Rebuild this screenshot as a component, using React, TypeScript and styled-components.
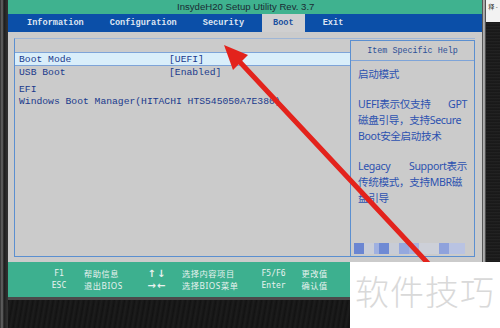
import React from "react";
import styled, { createGlobalStyle } from "styled-components";

const GlobalStyle = createGlobalStyle`
  html, body {
    margin: 0;
    padding: 0;
    background: #161616;
  }
  * {
    box-sizing: border-box;
  }
`;

const MONO = `"Liberation Mono", "Noto Sans CJK SC", monospace`;
const CJK = `"Noto Sans", "Noto Sans CJK SC", sans-serif`;

const TABS = ["Information", "Configuration", "Security", "Boot", "Exit"];

const ROWS: { label: string; value?: string; selected?: boolean; gap?: boolean }[] = [
  { label: "Boot Mode", value: "[UEFI]", selected: true },
  { label: "USB Boot", value: "[Enabled]" },
  { label: "", gap: true },
  { label: "EFI" },
  { label: "Windows Boot Manager(HITACHI HTS545050A7E380)" },
];

// lines with two parts are pushed to both edges, as the BIOS help text does
const HELP: { parts: string[]; gapBefore?: boolean }[] = [
  { parts: ["启动模式"] },
  { parts: ["UEFI表示仅支持", "GPT"], gapBefore: true },
  { parts: ["磁盘引导，支持Secure"] },
  { parts: ["Boot安全启动技术"] },
  { parts: ["Legacy", "Support表示"], gapBefore: true },
  { parts: ["传统模式，支持MBR磁"] },
  { parts: ["盘引导"] },
];

const MOSAIC = [
  { w: 10, c: "#6b86d2" },
  { w: 10, c: "#c9cdd8" },
  { w: 5, c: "#9fb0e0" },
  { w: 10, c: "#6f8ad4" },
  { w: 10, c: "#c8ccd6" },
  { w: 10, c: "#95a8de" },
  { w: 10, c: "#a6b4e0" },
  { w: 20, c: "#cdd0d8" },
  { w: 10, c: "#8fa2dc" },
  { w: 16, c: "#b9c3e2" },
];

const HINTS = [
  { k1: "F1", d1: "帮助信息", k2: "ESC", d2: "退出BIOS", keyW: 22, align: "center", arrows: false },
  { k1: "↑↓", d1: "选择内容项目", k2: "→←", d2: "选择BIOS菜单", keyW: 22, align: "center", arrows: true },
  { k1: "F5/F6", d1: "更改值", k2: "Enter", d2: "确认值", keyW: 26, align: "left", arrows: false },
];

const App = () => {
  return (
    <>
      <GlobalStyle />
      <Photo>
        <LeftEdge />
        <Monitor>
          <Screen>
            <TitleBar>InsydeH20 Setup Utility Rev. 3.7</TitleBar>
            <NavBar>
              {TABS.map((t) => (
                <Tab key={t} $active={t === "Boot"}>
                  {t}
                </Tab>
              ))}
            </NavBar>
            <Main>
              <Frame>
                <ListPanel>
                  <ListHeader />
                  {ROWS.map((r, i) =>
                    r.gap ? (
                      <Spacer key={i} />
                    ) : (
                      <Row key={i} $selected={r.selected}>
                        <Label>{r.label}</Label>
                        {r.value && <Value>{r.value}</Value>}
                      </Row>
                    )
                  )}
                </ListPanel>
                <HelpPanel>
                  <HelpHeader>Item Specific Help</HelpHeader>
                  <HelpBody>
                    {HELP.map((h, i) => (
                      <HelpLine key={i} $gap={h.gapBefore}>
                        {h.parts.map((p) => (
                          <span key={p}>{p}</span>
                        ))}
                      </HelpLine>
                    ))}
                  </HelpBody>
                  <Mosaic>
                    {MOSAIC.map((m, i) => (
                      <Tile key={i} $w={m.w} $c={m.c} />
                    ))}
                  </Mosaic>
                </HelpPanel>
              </Frame>
            </Main>
            <Footer>
              {HINTS.map((h, i) => (
                <HintGroup key={i} $keyW={h.keyW} $keyAlign={h.align}>
                  <Key $arrows={h.arrows}>{h.k1}</Key>
                  <Desc>{h.d1}</Desc>
                  <Key $arrows={h.arrows}>{h.k2}</Key>
                  <Desc>{h.d2}</Desc>
                </HintGroup>
              ))}
            </Footer>
          </Screen>
          <Bezel />
        </Monitor>
        <RightEdge>
          <Divider />
          <DarkStrip />
        </RightEdge>
        <CornerTab>释 -</CornerTab>
        <Arrow viewBox="0 0 500 328" width={500} height={328}>
          <line x1="238" y1="60" x2="452" y2="289" stroke="#e3231c" strokeWidth="5" strokeLinecap="round" />
          <polygon points="224,45 248,55 233,70" fill="#e3231c" />
        </Arrow>
        <Watermark>软件技巧</Watermark>
      </Photo>
    </>
  );
};

export default App;

const Photo = styled.div`
  position: relative;
  width: 500px;
  height: 328px;
  overflow: hidden;
  display: flex;
  background: repeating-linear-gradient(
      100deg,
      #141414 0px,
      #1d1d1d 2px,
      #121212 5px
    );
`;

const LeftEdge = styled.div`
  width: 8px;
  flex: none;
  background: linear-gradient(90deg, #2a2a2a 0, #6a6a6a 2px, #1c1c1c 4px, #303030 7px);
`;

const Monitor = styled.div`
  width: 474px;
  flex: none;
  display: flex;
  flex-direction: column;
`;

const Screen = styled.div`
  display: flex;
  flex-direction: column;
  height: 297px;
`;

const TitleBar = styled.div`
  height: 14px;
  background: #3fb28f;
  color: #1b2a33;
  font-family: "Liberation Sans", Arial, sans-serif;
  font-size: 9.6px;
  line-height: 14px;
  padding-left: 169px;
  white-space: nowrap;
`;

const NavBar = styled.div`
  height: 18px;
  background: #0b4fa8;
  display: flex;
  align-items: stretch;
  padding-left: 19px;
  gap: 26px;
`;

const Tab = styled.div<{ $active?: boolean }>`
  font-family: ${MONO};
  font-weight: bold;
  font-size: 8.6px;
  line-height: 18px;
  color: ${({ $active }) => ($active ? "#1b4fa0" : "#dfe6f2")};
  background: ${({ $active }) => ($active ? "#cfcfd0" : "transparent")};
  padding: 0 ${({ $active }) => ($active ? "11px" : "0")};
  margin: 0 ${({ $active }) => ($active ? "-8px" : "0")};
  white-space: nowrap;
`;

const Main = styled.div`
  height: 230px;
  background: #cbcbcb;
  padding: 6px 7px 5px 6px;
`;

const Frame = styled.div`
  height: 100%;
  display: flex;
  border-left: 1px solid #5b8fd0;
  border-top: 1px solid #9fb6d6;
  border-bottom: 1px solid #5b8fd0;
`;

const ListPanel = styled.div`
  flex: 1;
  display: flex;
  flex-direction: column;
`;

const ListHeader = styled.div`
  height: 14px;
  flex: none;
  border-bottom: 1px solid #7ea4d8;
`;

const Row = styled.div<{ $selected?: boolean }>`
  height: ${({ $selected }) => ($selected ? "13px" : "12px")};
  flex: none;
  display: flex;
  align-items: center;
  padding-left: 4px;
  font-family: ${MONO};
  font-size: 9.7px;
  color: #1a3a8c;
  white-space: nowrap;
  background: ${({ $selected }) => ($selected ? "#d9eefa" : "transparent")};
  border-bottom: ${({ $selected }) => ($selected ? "1px solid #7ea4d8" : "none")};
`;

const Spacer = styled.div`
  height: 5px;
  flex: none;
`;

const Label = styled.span`
  width: 150px;
  flex: none;
`;

const Value = styled.span``;

const HelpPanel = styled.div`
  width: 125px;
  flex: none;
  display: flex;
  flex-direction: column;
  border: 1px solid #5b8fd0;
  border-bottom: none;
  margin-top: 1px;
`;

const HelpHeader = styled.div`
  height: 20px;
  border-bottom: 1px solid #7ea4d8;
  font-family: ${MONO};
  font-size: 8.4px;
  line-height: 20px;
  text-align: center;
  color: #2b4f96;
  white-space: nowrap;
`;

const HelpBody = styled.div`
  flex: 1;
  padding: 5px 7px 0 7px;
`;

const HelpLine = styled.div<{ $gap?: boolean }>`
  display: flex;
  justify-content: space-between;
  font-family: ${CJK};
  font-size: 10.6px;
  letter-spacing: -0.35px;
  line-height: 16px;
  color: #2d52b0;
  white-space: nowrap;
  margin-top: ${({ $gap }) => ($gap ? "14px" : "0")};
`;

const Mosaic = styled.div`
  display: flex;
  height: 11px;
  margin: 0 4px 2px 3px;
`;

const Tile = styled.div<{ $w: number; $c: string }>`
  width: ${({ $w }) => $w}px;
  background: ${({ $c }) => $c};
`;

const Footer = styled.div`
  height: 35px;
  background: #3db08f;
  display: flex;
  align-items: center;
  padding-left: 40px;
  gap: 23px;
`;

const HintGroup = styled.div<{ $keyW: number; $keyAlign: string }>`
  display: grid;
  grid-template-columns: ${({ $keyW }) => $keyW}px auto;
  column-gap: 14px;
  row-gap: 0;
  align-items: center;
  color: #e9f2ef;
  white-space: nowrap;
  & > span:nth-child(odd) {
    text-align: ${({ $keyAlign }) => $keyAlign};
  }
`;

const Key = styled.span<{ $arrows?: boolean }>`
  display: block;
  font-family: ${({ $arrows }) => ($arrows ? `"DejaVu Sans", sans-serif` : `"DejaVu Sans Mono", monospace`)};
  font-size: ${({ $arrows }) => ($arrows ? "10px" : "8px")};
  font-weight: ${({ $arrows }) => ($arrows ? "bold" : "normal")};
  letter-spacing: ${({ $arrows }) => ($arrows ? "1px" : "0")};
  line-height: 12px;
  height: 12px;
`;

const Desc = styled.span`
  display: block;
  font-family: ${CJK};
  font-size: 8.2px;
  letter-spacing: 0.6px;
  line-height: 12px;
  height: 12px;
`;

const Bezel = styled.div`
  height: 3px;
  background: #4a4a4a;
`;

const RightEdge = styled.div`
  flex: 1;
  display: flex;
`;

const Divider = styled.div`
  width: 4px;
  background: linear-gradient(90deg, #2c2c2c, #b8b8b8 40%, #9a9a9a 70%, #1a1a1a);
`;

const DarkStrip = styled.div`
  flex: 1;
  background: repeating-linear-gradient(0deg, #111 0, #262626 1px, #151515 3px);
`;

const CornerTab = styled.div`
  position: absolute;
  top: 0;
  right: 0;
  width: 14px;
  height: 22px;
  background: #f2f2f2;
  color: #333;
  font-family: ${CJK};
  font-size: 6px;
  line-height: 10px;
  padding-top: 2px;
  text-align: center;
`;

const Arrow = styled.svg`
  position: absolute;
  left: 0;
  top: 0;
  pointer-events: none;
`;

const Watermark = styled.div`
  position: absolute;
  left: 350px;
  top: 262px;
  width: 150px;
  height: 66px;
  background: #ffffff;
  color: #d9d9d9;
  font-family: "Noto Sans CJK SC", sans-serif;
  font-weight: 300;
  font-size: 34px;
  line-height: 40px;
  padding: 9px 0 0 5px;
  letter-spacing: 1px;
  white-space: nowrap;
`;
